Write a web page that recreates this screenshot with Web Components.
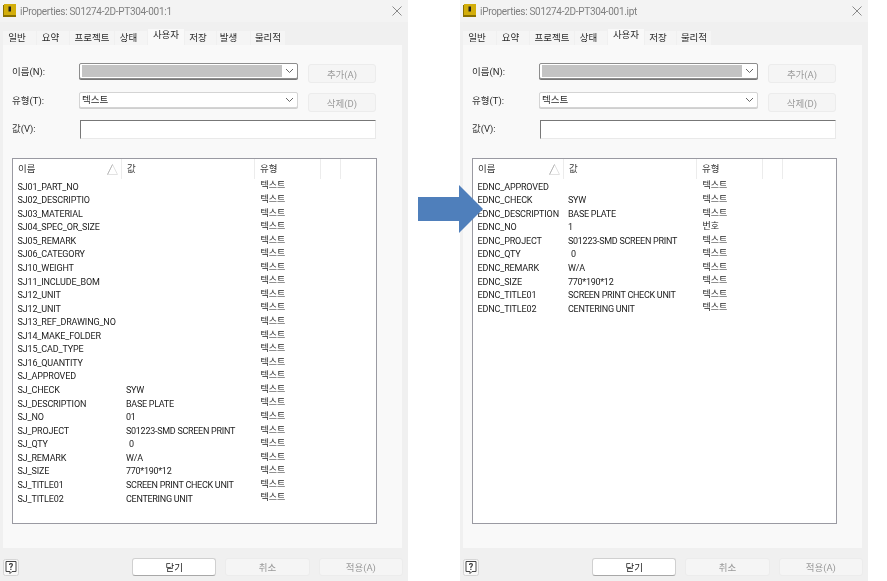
<!DOCTYPE html>
<html lang="ko"><head><meta charset="utf-8"><title>iProperties</title>
<style>
html,body{margin:0;padding:0;background:#fff}
body{font:9px Roboto,"Noto Sans CJK KR",sans-serif;color:#2b2b2b;width:887px;height:581px;overflow:hidden}
#stage{position:relative;display:flex;gap:52px;width:887px;height:581px}
</style></head><body>
<div id="stage">
<ip-dialog heading="iProperties: S01274-2D-PT304-001:1" tabs="일반:34:5,요약:33:5,프로젝트:45:0,상태:33:5,사용자:37:0,저장:32:5,발생:34:10,물리적:35:0" c1="109">
<ip-row n="SJ01_PART_NO"></ip-row><ip-row n="SJ02_DESCRIPTIO"></ip-row><ip-row n="SJ03_MATERIAL"></ip-row><ip-row n="SJ04_SPEC_OR_SIZE"></ip-row><ip-row n="SJ05_REMARK"></ip-row><ip-row n="SJ06_CATEGORY"></ip-row><ip-row n="SJ10_WEIGHT"></ip-row><ip-row n="SJ11_INCLUDE_BOM"></ip-row><ip-row n="SJ12_UNIT"></ip-row><ip-row n="SJ12_UNIT"></ip-row><ip-row n="SJ13_REF_DRAWING_NO"></ip-row><ip-row n="SJ14_MAKE_FOLDER"></ip-row><ip-row n="SJ15_CAD_TYPE"></ip-row><ip-row n="SJ16_QUANTITY"></ip-row><ip-row n="SJ_APPROVED"></ip-row><ip-row n="SJ_CHECK" v="SYW"></ip-row><ip-row n="SJ_DESCRIPTION" v="BASE PLATE"></ip-row><ip-row n="SJ_NO" v="01"></ip-row><ip-row n="SJ_PROJECT" v="S01223-SMD SCREEN PRINT"></ip-row><ip-row n="SJ_QTY" v="0" i></ip-row><ip-row n="SJ_REMARK" v="W/A"></ip-row><ip-row n="SJ_SIZE" v="770*190*12"></ip-row><ip-row n="SJ_TITLE01" v="SCREEN PRINT CHECK UNIT"></ip-row><ip-row n="SJ_TITLE02" v="CENTERING UNIT"></ip-row>
</ip-dialog>
<ip-dialog heading="iProperties: S01274-2D-PT304-001.ipt" tabs="일반:34:5,요약:33:5,프로젝트:45:0,상태:33:5,사용자:37:0,저장:32:5,물리적:35:0" c1="91">
<ip-row n="EDNC_APPROVED"></ip-row><ip-row n="EDNC_CHECK" v="SYW"></ip-row><ip-row n="EDNC_DESCRIPTION" v="BASE PLATE"></ip-row><ip-row n="EDNC_NO" v="1" t="번호"></ip-row><ip-row n="EDNC_PROJECT" v="S01223-SMD SCREEN PRINT"></ip-row><ip-row n="EDNC_QTY" v="0" i></ip-row><ip-row n="EDNC_REMARK" v="W/A"></ip-row><ip-row n="EDNC_SIZE" v="770*190*12"></ip-row><ip-row n="EDNC_TITLE01" v="SCREEN PRINT CHECK UNIT"></ip-row><ip-row n="EDNC_TITLE02" v="CENTERING UNIT"></ip-row>
</ip-dialog>
<ip-arrow></ip-arrow>
</div>
<script>
const KR='Roboto,"Noto Sans CJK KR",sans-serif';
class IpRow extends HTMLElement{
 connectedCallback(){
  const r=this.shadowRoot||this.attachShadow({mode:'open'});
  const a=n=>this.getAttribute(n)||'';
  r.innerHTML=`<style>
  :host{display:grid;grid-template-columns:var(--c1) 133px 1fr;height:13.565px;font:9px/13.565px ${KR};color:#222;white-space:nowrap}
  span{display:block;overflow:visible}
  .n{padding-left:4.5px;letter-spacing:-.14px}.v{padding-left:4px;letter-spacing:-.28px}.t{padding-left:5.5px;position:relative;top:-1.2px;letter-spacing:0}
  .i{padding-left:7px}
  </style><span class="n">${a('n')}</span><span class="v ${this.hasAttribute('i')?'i':''}">${a('v')}</span><span class="t">${a('t')||'텍스트'}</span>`;
 }
}
customElements.define('ip-row',IpRow);

class IpCombo extends HTMLElement{
 constructor(){super();this.attachShadow({mode:'open'}).innerHTML=`<style>
  :host{display:flex;align-items:center;box-sizing:border-box;width:219px;height:16px;background:#fff;border:1px solid #d4d4d4;border-radius:2px;padding:0 3px 0 2px;position:relative;font:9.5px ${KR};color:#2b2b2b;box-shadow:0 1px 0 #cfcfcf}
  :host([focus]){border-color:#8d8d8d;box-shadow:0 1px 0 #777}
  .c{flex:1;min-width:0;display:flex;align-items:center;height:100%;line-height:11px;padding-bottom:2px;box-sizing:border-box}
  svg{width:9px;height:6px;flex:none}
  </style><div class="c"><slot></slot></div><svg viewBox="0 0 9 6"><path d="M1 1l3.5 3.5L8 1" fill="none" stroke="#666" stroke-width="1"/></svg>`}
}
customElements.define('ip-combo',IpCombo);

class IpButton extends HTMLElement{
 constructor(){super();this.attachShadow({mode:'open'}).innerHTML=`<style>
  :host{display:flex;align-items:center;justify-content:center;box-sizing:border-box;background:#f5f5f5;border:1px solid #ececec;border-radius:3px;color:#9a9a9a;font:9.5px ${KR}}
  :host([primary]){background:#fff;border:1px solid #d0d0d0;border-bottom-color:#a8a8a8;color:#222}
  </style><slot></slot>`}
}
customElements.define('ip-button',IpButton);

class IpTabs extends HTMLElement{
 connectedCallback(){
  const r=this.shadowRoot||this.attachShadow({mode:'open'});
  const tabs=this.getAttribute('items').split(',').map(s=>s.split(':'));
  r.innerHTML=`<style>
  :host{display:flex;align-items:flex-end;height:23px;padding-left:3px;font:9.5px ${KR};color:#2b2b2b}
  div{box-sizing:border-box;height:14px;margin-right:1px;background:#f5f5f5;text-align:center;line-height:14px;flex:none}
  .on{height:16px;background:#f9f9f9;line-height:12px}
  </style>`+tabs.map(([t,w,p])=>`<div class="${t==='사용자'?'on':''}" style="width:${w-1}px;padding-right:${p}px">${t}</div>`).join('');
 }
}
customElements.define('ip-tabs',IpTabs);

class IpList extends HTMLElement{
 connectedCallback(){
  const r=this.shadowRoot||this.attachShadow({mode:'open'});
  r.innerHTML=`<style>
  :host{display:block;box-sizing:border-box;width:365px;height:366px;background:#fff;border:1px solid #9a9aa2;font:9.5px ${KR};color:#333}
  .h{display:grid;grid-template-columns:var(--c1) 133px 66px 20px 1fr;height:20px;}
  .h>div{box-sizing:border-box;border-right:1px solid #ececec;padding-left:5px;line-height:19px;position:relative}
  .h>div:last-child{border:0}
  svg{position:absolute;right:3px;top:5px;width:11px;height:11px}
  .b{display:block;padding-top:1.6px}
  </style><div class="h"><div>이름<svg viewBox="0 0 11 11"><path d="M.5 10.5L5.5 .5 10.5 10.5z" fill="none" stroke="#e2e2e2"/><path d="M.5 10.5L5.5 .5" stroke="#b8b8b8" fill="none"/></svg></div><div>값</div><div>유형</div><div></div><div></div></div><div class="b"><slot></slot></div>`;
 }
}
customElements.define('ip-list',IpList);

class IpDialog extends HTMLElement{
 connectedCallback(){
  const r=this.shadowRoot||this.attachShadow({mode:'open'});
  const h=this.getAttribute('heading'),tabs=this.getAttribute('tabs');
  r.innerHTML=`<style>
  :host{display:flex;flex-direction:column;flex:none;width:408px;height:581px;background:#f0f0f0;--c1:${this.getAttribute('c1')}px;filter:blur(.3px);font:9.5px ${KR};color:#2b2b2b}
  .title{display:flex;align-items:center;height:22px;background:#f3f3f3;gap:4px;padding-left:3px;color:#808080;font-size:10px;letter-spacing:-.3px;font-family:Roboto,sans-serif;flex:none}
  .title span{flex:1}
  .x{width:10px;height:10px;margin-right:6px}
  .logo{width:13px;height:13px;flex:none;margin-top:-1px}
  .panel{box-sizing:border-box;flex:none;width:399px;height:503px;margin-left:3px;background:#f9f9f9;padding:18px 0 0 9px}
  .f{display:grid;grid-template-columns:57px 219px 68px;column-gap:10px;align-items:start}
  .f1{height:19px;margin-bottom:10px}.f2{height:19px;margin-bottom:9px}.f3{height:19px;margin-bottom:19px}
  label{line-height:17px;display:block}
  ip-button.s{height:19px;margin-top:1px}
  .input{box-sizing:border-box;grid-column:2/4;width:296px;height:19px;margin-left:1px;background:#fff;border:1px solid #e9e9e9;border-top:1px solid #777;border-left:1px solid #777}
  .blank{display:block;width:100%;height:12px;background:#c3c3c3;margin:2px 3px 0 0}
  .foot{flex:1;display:flex;align-items:center;padding:5px 5px 0 3px}
  .help{width:16px;height:17px;flex:none}
  .foot ip-button{width:85px;height:18px;margin-left:9px}
  .foot .first{margin-left:113px}
  </style>
  <div class="title"><svg class="logo" viewBox="0 0 13 13"><rect width="13" height="12" y="1" fill="#8a7000"/><rect width="12" height="11" x="1" fill="#d3ae0b"/><rect x="5.5" y="2.5" width="2.5" height="5" fill="#222"/></svg><span>${h}</span>
  <svg class="x" viewBox="0 0 10 10"><path d="M.5 .5l9 9M9.5 .5l-9 9" stroke="#8a8a8a" fill="none"/></svg></div>
  <ip-tabs items="${tabs}"></ip-tabs>
  <div class="panel">
   <div class="f f1"><label>이름(N):</label><ip-combo focus><i class="blank"></i></ip-combo><ip-button class="s">추가(A)</ip-button></div>
   <div class="f f2"><label>유형(T):</label><ip-combo>텍스트</ip-combo><ip-button class="s">삭제(D)</ip-button></div>
   <div class="f f3"><label>값(V):</label><div class="input"></div></div>
   <ip-list><slot></slot></ip-list>
  </div>
  <div class="foot">
   <svg class="help" viewBox="0 0 16 17"><rect x=".5" y=".5" width="15" height="16" rx="2" fill="#f8f8f8" stroke="#d5d5d5"/><path d="M3 2.5h10v10H9l-2 2v-2H3z" fill="#fff" stroke="#444"/><text x="8" y="11" font-size="9" font-weight="700" text-anchor="middle" fill="#333" font-family="Roboto,sans-serif">?</text></svg>
   <ip-button primary class="first">닫기</ip-button><ip-button>취소</ip-button><ip-button>적용(A)</ip-button>
  </div>`;
 }
}
customElements.define('ip-dialog',IpDialog);

class IpArrow extends HTMLElement{
 constructor(){super();this.attachShadow({mode:'open'}).innerHTML=`<style>:host{position:absolute;left:418px;top:185px;width:65px;height:48px;display:block}svg{display:block}</style><svg width="65" height="48" viewBox="0 0 65 48"><path d="M0 12h41V0l24 24-24 24V36H0z" fill="#4f7fbb"/></svg>`}
}
customElements.define('ip-arrow',IpArrow);
</script>
</body></html>
